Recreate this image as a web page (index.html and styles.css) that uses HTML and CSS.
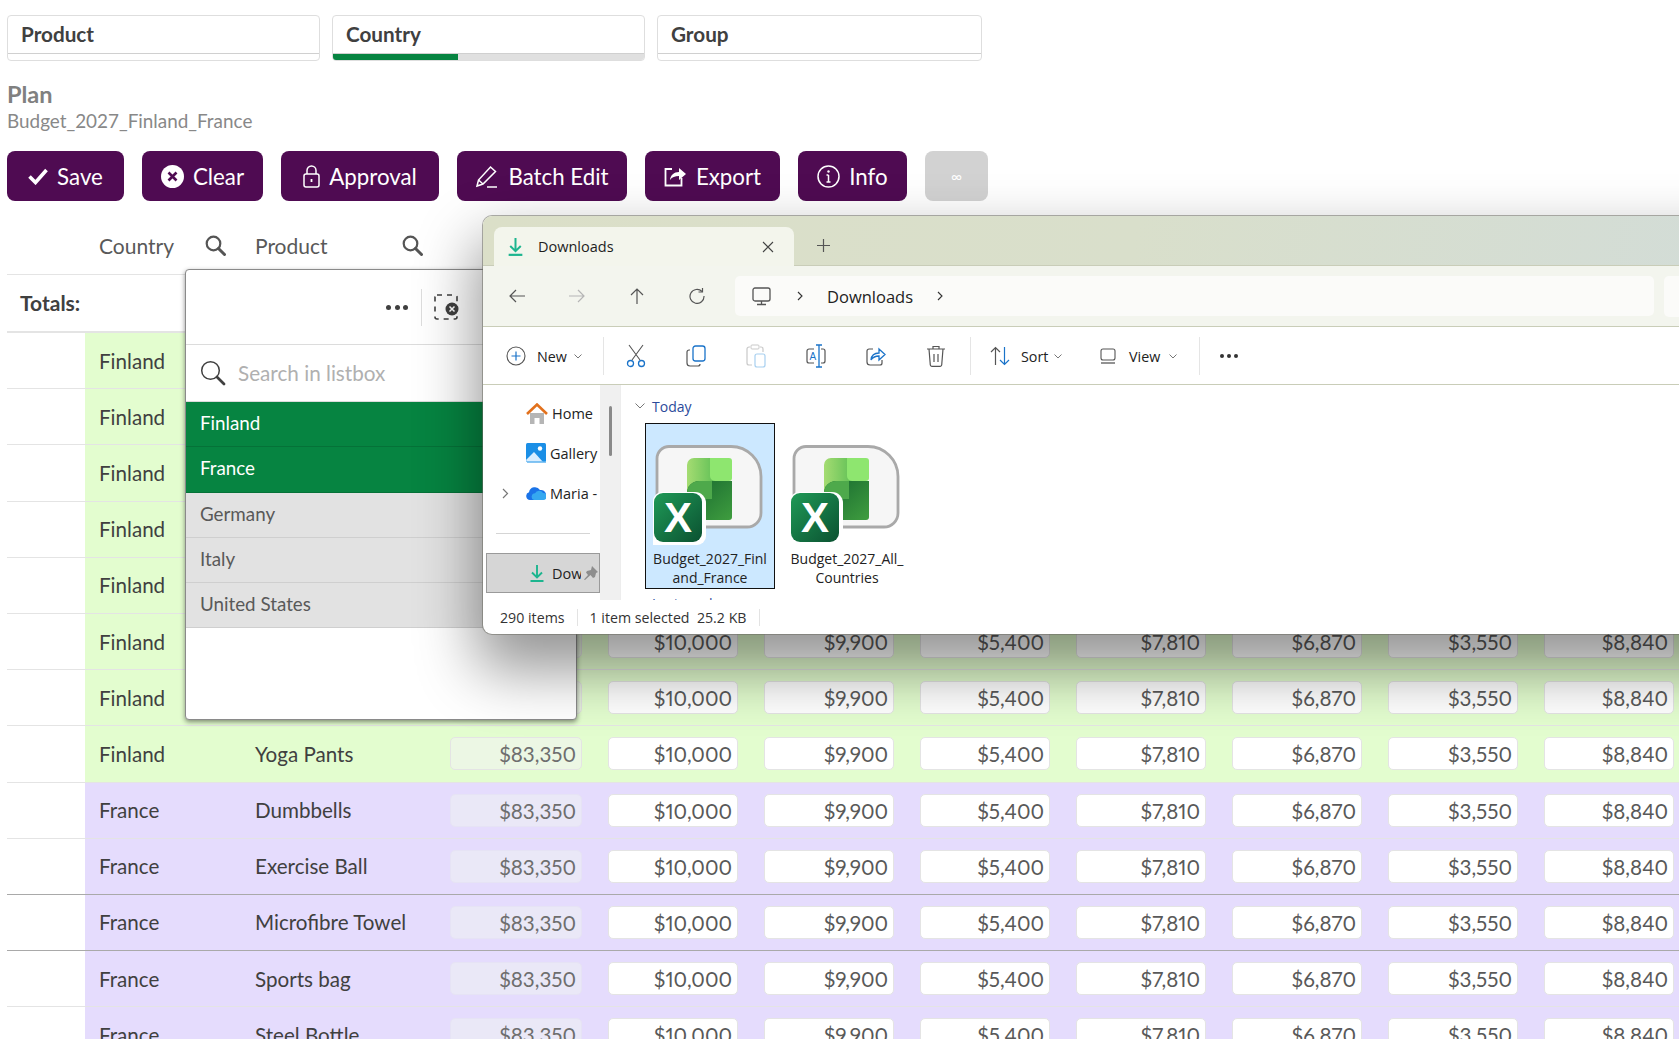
FILE: index.html
```html
<!DOCTYPE html>
<html lang="en">
<head>
    <meta charset="UTF-8">
    <title>Plan - Budget_2027_Finland_France</title>
    <link rel="stylesheet" href="styles.css">
</head>
<body>
    <svg class="defs" width="0" height="0">
        <defs>
            <linearGradient id="xl-badge" x1="0" y1="0" x2="1" y2="1"><stop offset="0" stop-color="#1f9a57"/><stop offset="1" stop-color="#0b5131"/></linearGradient>
            <linearGradient id="xl-top" x1="0" y1="0" x2="1" y2="0"><stop offset="0" stop-color="#a5dc72"/><stop offset="1" stop-color="#4cb84e"/></linearGradient>
            <linearGradient id="xl-body" x1="0" y1="0" x2="1" y2="1"><stop offset="0" stop-color="#17682f"/><stop offset="1" stop-color="#3f9d3f"/></linearGradient>
            <g id="search-icon"><circle cx="8.5" cy="8.5" r="6.8" fill="none" stroke="currentColor" stroke-width="2.2"/><path d="M13.5 13.5l6 6" stroke="currentColor" stroke-width="3" stroke-linecap="round"/></g>
            <g id="down-icon"><path d="M8 1v12M3 8.5l5 5 5-5" fill="none" stroke="#1db58f" stroke-width="1.9"/><path d="M1.5 17h13" stroke="#1db58f" stroke-width="2"/></g>
            <g id="xl-icon">
                <path d="M16 1.500h62a30 30 0 0 1 30 30V68a14 14 0 0 1-14 14H16A12 12 0 0 1 4 70V13.500a12 12 0 0 1 12-12z" fill="#f6f6f6" stroke="#a9a9a9" stroke-width="2.800"/>
                <path d="M34 20a7 7 0 0 1 7-7h30v23H58a12 12 0 0 0-12 12v6H34z" fill="url(#xl-top)"/>
                <path d="M34 54v-6a12 12 0 0 1 12-12h33v36a3 3 0 0 1-3 3H34z" fill="url(#xl-body)"/>
                <path d="M34 54v-6a12 12 0 0 1 12-12h13v18z" fill="#4ea94b"/>
                <path d="M57 13h19a3 3 0 0 1 3 3v17a3 3 0 0 1-3 3H62a5 5 0 0 1-5-5z" fill="#8ee66f"/>
                <path d="M0 56a9 9 0 0 1 9-9h33a11 11 0 0 1 11 11v33a9 9 0 0 1-9 9H0z" fill="#fff"/>
                <rect x="1" y="48" width="48" height="49" rx="9" fill="url(#xl-badge)"/>
                <text x="25" y="87" class="xl-letter">X</text>
            </g>
        </defs>
    </svg>

    <div class="page">
        <div class="tabs">
            <div class="tab"><span class="tab-name">Product</span><div class="tab-bar"></div></div>
            <div class="tab tab-country"><span class="tab-name">Country</span><div class="tab-bar"><div class="tab-fill"></div></div></div>
            <div class="tab tab-group"><span class="tab-name">Group</span><div class="tab-bar"></div></div>
        </div>

        <div class="plan-title">Plan</div>
        <div class="plan-name">Budget_2027_Finland_France</div>

        <div class="actions">
            <button class="btn btn-save"><svg width="20" height="18" viewBox="0 0 20 18"><path d="M1.5 9.5l6 6L18.5 3" fill="none" stroke="#fff" stroke-width="3.6"/></svg>Save</button>
            <button class="btn btn-clear"><svg width="23" height="23" viewBox="0 0 23 23"><circle cx="11.5" cy="11.5" r="11.5" fill="#fff"/><path d="M7.5 7.5l8 8M15.5 7.5l-8 8" stroke="#4f0b52" stroke-width="2.6"/></svg>Clear</button>
            <button class="btn btn-approval"><svg width="17" height="23" viewBox="0 0 17 23"><rect x="1" y="9" width="15" height="13" rx="2" fill="none" stroke="#fff" stroke-width="1.5"/><path d="M4 9V5.500a4.500 4.500 0 0 1 9 0V9" fill="none" stroke="#fff" stroke-width="1.5"/><path d="M8.500 14v3" stroke="#fff" stroke-width="1.800"/></svg>Approval</button>
            <button class="btn btn-batch"><svg width="24" height="24" viewBox="0 0 24 24"><path d="M2 22l1.500-6L15.500 3l5 4.500L8 20z" fill="none" stroke="#fff" stroke-width="1.500"/><path d="M3.500 16L8 20M12 23h10" stroke="#fff" stroke-width="1.500"/></svg>Batch Edit</button>
            <button class="btn btn-export"><svg width="23" height="22" viewBox="0 0 23 22"><path d="M8 4H1.500v16.500h16V13" fill="none" stroke="#fff" stroke-width="1.800"/><path d="M6 15c.5-5 4-8 9-8V3l7 6-7 6v-4c-4 0-7 1-9 4z" fill="#fff"/></svg>Export</button>
            <button class="btn btn-info"><svg width="23" height="23" viewBox="0 0 23 23"><circle cx="11.500" cy="11.500" r="10.500" fill="none" stroke="#fff" stroke-width="1.500"/><path d="M11.500 10v7M9.500 17h4M9.500 10h2" fill="none" stroke="#fff" stroke-width="1.500"/><circle cx="11.500" cy="6.500" r="1.200" fill="#fff"/></svg>Info</button>
            <button class="btn btn-off">∞</button>
        </div>

        <div class="grid-head">
            <span class="head-country">Country</span>
            <svg class="head-search" width="21" height="21" viewBox="0 0 21 21"><use href="#search-icon"/></svg>
            <span class="head-product">Product</span>
            <svg class="head-search" width="21" height="21" viewBox="0 0 21 21"><use href="#search-icon"/></svg>
        </div>
        <div class="totals">Totals:</div>

        <div class="rows">
            <div class="row fin"><div class="tint"><span class="c">Finland</span><span class="p">Dumbbells</span><span class="t">$83,350</span><span class="v">$10,000</span><span class="v">$9,900</span><span class="v">$5,400</span><span class="v">$7,810</span><span class="v">$6,870</span><span class="v">$3,550</span><span class="v">$8,840</span></div></div>
            <div class="row fin"><div class="tint"><span class="c">Finland</span><span class="p">Exercise Ball</span><span class="t">$83,350</span><span class="v">$10,000</span><span class="v">$9,900</span><span class="v">$5,400</span><span class="v">$7,810</span><span class="v">$6,870</span><span class="v">$3,550</span><span class="v">$8,840</span></div></div>
            <div class="row fin"><div class="tint"><span class="c">Finland</span><span class="p">Microfibre Towel</span><span class="t">$83,350</span><span class="v">$10,000</span><span class="v">$9,900</span><span class="v">$5,400</span><span class="v">$7,810</span><span class="v">$6,870</span><span class="v">$3,550</span><span class="v">$8,840</span></div></div>
            <div class="row fin"><div class="tint"><span class="c">Finland</span><span class="p">Sports bag</span><span class="t">$83,350</span><span class="v">$10,000</span><span class="v">$9,900</span><span class="v">$5,400</span><span class="v">$7,810</span><span class="v">$6,870</span><span class="v">$3,550</span><span class="v">$8,840</span></div></div>
            <div class="row fin"><div class="tint"><span class="c">Finland</span><span class="p">Steel Bottle</span><span class="t">$83,350</span><span class="v">$10,000</span><span class="v">$9,900</span><span class="v">$5,400</span><span class="v">$7,810</span><span class="v">$6,870</span><span class="v">$3,550</span><span class="v">$8,840</span></div></div>
            <div class="row fin"><div class="tint"><span class="c">Finland</span><span class="p">Water Bottle</span><span class="t">$83,350</span><span class="v">$10,000</span><span class="v">$9,900</span><span class="v">$5,400</span><span class="v">$7,810</span><span class="v">$6,870</span><span class="v">$3,550</span><span class="v">$8,840</span></div></div>
            <div class="row fin"><div class="tint"><span class="c">Finland</span><span class="p">Yoga Mat</span><span class="t">$83,350</span><span class="v">$10,000</span><span class="v">$9,900</span><span class="v">$5,400</span><span class="v">$7,810</span><span class="v">$6,870</span><span class="v">$3,550</span><span class="v">$8,840</span></div></div>
            <div class="row fin"><div class="tint"><span class="c">Finland</span><span class="p">Yoga Pants</span><span class="t">$83,350</span><span class="v">$10,000</span><span class="v">$9,900</span><span class="v">$5,400</span><span class="v">$7,810</span><span class="v">$6,870</span><span class="v">$3,550</span><span class="v">$8,840</span></div></div>
            <div class="row fra"><div class="tint"><span class="c">France</span><span class="p">Dumbbells</span><span class="t">$83,350</span><span class="v">$10,000</span><span class="v">$9,900</span><span class="v">$5,400</span><span class="v">$7,810</span><span class="v">$6,870</span><span class="v">$3,550</span><span class="v">$8,840</span></div></div>
            <div class="row fra dark-line"><div class="tint"><span class="c">France</span><span class="p">Exercise Ball</span><span class="t">$83,350</span><span class="v">$10,000</span><span class="v">$9,900</span><span class="v">$5,400</span><span class="v">$7,810</span><span class="v">$6,870</span><span class="v">$3,550</span><span class="v">$8,840</span></div></div>
            <div class="row fra dark-line"><div class="tint"><span class="c">France</span><span class="p">Microfibre Towel</span><span class="t">$83,350</span><span class="v">$10,000</span><span class="v">$9,900</span><span class="v">$5,400</span><span class="v">$7,810</span><span class="v">$6,870</span><span class="v">$3,550</span><span class="v">$8,840</span></div></div>
            <div class="row fra"><div class="tint"><span class="c">France</span><span class="p">Sports bag</span><span class="t">$83,350</span><span class="v">$10,000</span><span class="v">$9,900</span><span class="v">$5,400</span><span class="v">$7,810</span><span class="v">$6,870</span><span class="v">$3,550</span><span class="v">$8,840</span></div></div>
            <div class="row fra"><div class="tint"><span class="c">France</span><span class="p">Steel Bottle</span><span class="t">$83,350</span><span class="v">$10,000</span><span class="v">$9,900</span><span class="v">$5,400</span><span class="v">$7,810</span><span class="v">$6,870</span><span class="v">$3,550</span><span class="v">$8,840</span></div></div>
        </div>
    </div>

    <!-- listbox popup -->
    <div class="listbox">
        <div class="lb-top">
            <span class="lb-dots"><i></i><i></i><i></i></span>
            <span class="lb-sep"></span>
            <svg width="26" height="26" viewBox="0 0 26 26"><rect x="1" y="1" width="22" height="24" rx="2" fill="none" stroke="#404040" stroke-width="1.600" stroke-dasharray="5 5"/><circle cx="18" cy="15" r="6.500" fill="#404040"/><path d="M15.500 12.500l5 5M20.500 12.500l-5 5" stroke="#fff" stroke-width="1.500"/></svg>
        </div>
        <div class="lb-search">
            <svg width="26" height="26" viewBox="0 0 26 26"><circle cx="10.500" cy="10.500" r="8.800" fill="none" stroke="#404040" stroke-width="1.500"/><path d="M17 17l7 7" stroke="#404040" stroke-width="2.800" stroke-linecap="round"/></svg>
            <span>Search in listbox</span>
        </div>
        <div class="lb-item lb-on">Finland</div>
        <div class="lb-item lb-on">France</div>
        <div class="lb-item">Germany</div>
        <div class="lb-item">Italy</div>
        <div class="lb-item">United States</div>
    </div>

    <!-- file explorer window -->
    <div class="explorer">
        <div class="ex-title">
            <div class="ex-tab">
                <svg width="17" height="20" viewBox="0 0 16 19"><use href="#down-icon"/></svg>
                <span class="ex-tab-name">Downloads</span>
                <svg width="12" height="12" viewBox="0 0 12 12"><path d="M1 1l10 10M11 1L1 11" stroke="#444" stroke-width="1.100"/></svg>
            </div>
            <svg class="ex-plus" width="13" height="13" viewBox="0 0 13 13"><path d="M6.500 0v13M0 6.500h13" stroke="#555" stroke-width="1.200"/></svg>
        </div>

        <div class="ex-nav">
            <span class="nav-btn"><svg width="16" height="14" viewBox="0 0 16 14"><path d="M16 7H1M7 1L1 7l6 6" fill="none" stroke="#555" stroke-width="1.200"/></svg></span>
            <span class="nav-btn"><svg width="16" height="14" viewBox="0 0 16 14"><path d="M0 7h15M9 1l6 6-6 6" fill="none" stroke="#b5b5b5" stroke-width="1.200"/></svg></span>
            <span class="nav-btn"><svg width="14" height="16" viewBox="0 0 14 16"><path d="M7 16V1M1 7l6-6 6 6" fill="none" stroke="#555" stroke-width="1.200"/></svg></span>
            <span class="nav-btn"><svg width="16" height="16" viewBox="0 0 16 16"><path d="M13 3.500A7 7 0 1 0 15 8" fill="none" stroke="#555" stroke-width="1.200"/><path d="M13.500 0v4h-4" fill="none" stroke="#555" stroke-width="1.200"/></svg></span>
            <div class="address">
                <svg width="19" height="19" viewBox="0 0 19 19"><rect x="1" y="1" width="17" height="13" rx="2" fill="none" stroke="#555" stroke-width="1.300"/><path d="M9.500 14v3M5 17.500h9" stroke="#555" stroke-width="1.300"/></svg>
                <svg class="crumb-a" width="6" height="10" viewBox="0 0 6 10"><path d="M1 1l4 4-4 4" fill="none" stroke="#333" stroke-width="1.100"/></svg>
                <span class="crumb-text">Downloads</span>
                <svg class="crumb-b" width="6" height="10" viewBox="0 0 6 10"><path d="M1 1l4 4-4 4" fill="none" stroke="#333" stroke-width="1.100"/></svg>
            </div>
            <div class="search-stub"></div>
        </div>

        <div class="ex-cmd">
            <svg class="cmd-new" width="20" height="20" viewBox="0 0 20 20"><circle cx="10" cy="10" r="9" fill="none" stroke="#555" stroke-width="1.100"/><path d="M10 5.500v9M5.500 10h9" stroke="#1a73c9" stroke-width="1.200"/></svg>
            <span class="cmd-label lbl-new">New</span>
            <svg class="chev" width="8" height="5" viewBox="0 0 8 5"><path d="M.5.500L4 4 7.500.500" fill="none" stroke="#777"/></svg>
            <span class="cmd-sep sep-a"></span>
            <svg class="cmd-icon first" width="20" height="24" viewBox="0 0 20 24"><path d="M3 1l11 15M17 1L6 16" stroke="#555" stroke-width="1.100"/><circle cx="4.500" cy="19.500" r="3" fill="none" stroke="#1a73c9" stroke-width="1.300"/><circle cx="15.500" cy="19.500" r="3" fill="none" stroke="#1a73c9" stroke-width="1.300"/></svg>
            <svg class="cmd-icon" width="20" height="22" viewBox="0 0 20 22"><rect x="7" y="1" width="12" height="15" rx="2.500" fill="none" stroke="#1a73c9" stroke-width="1.300"/><path d="M4 5H3a2 2 0 0 0-2 2v11a3 3 0 0 0 3 3h8a2 2 0 0 0 2-2" fill="none" stroke="#555" stroke-width="1.200"/></svg>
            <svg class="cmd-icon" width="20" height="24" viewBox="0 0 20 24"><path d="M4 3H3a2 2 0 0 0-2 2v14a2 2 0 0 0 2 2h3M14 3h1a2 2 0 0 1 2 2v3" fill="none" stroke="#c9c9c9" stroke-width="1.200"/><rect x="5" y="1" width="8" height="4" rx="1" fill="none" stroke="#c9c9c9"/><rect x="9" y="10" width="10" height="13" rx="2" fill="none" stroke="#a8d0f0" stroke-width="1.200"/></svg>
            <svg class="cmd-icon" width="20" height="24" viewBox="0 0 20 24"><path d="M8 5H3a2 2 0 0 0-2 2v10a2 2 0 0 0 2 2h5M15 5h2a2 2 0 0 1 2 2v10a2 2 0 0 1-2 2h-2" fill="none" stroke="#555" stroke-width="1.200"/><path d="M10 1h6M10 23h6M13 1v22" stroke="#1a73c9" stroke-width="1.300"/><text x="3.500" y="16" class="rename-letter">A</text></svg>
            <svg class="cmd-icon" width="20" height="20" viewBox="0 0 20 20"><path d="M7 3H3a2 2 0 0 0-2 2v11a3 3 0 0 0 3 3h10a2 2 0 0 0 2-2v-3" fill="none" stroke="#555" stroke-width="1.200"/><path d="M5 14c.5-5 4-7 8-7V3l6 5.500-6 5.500v-4c-3 0-6 1-8 4z" fill="none" stroke="#1a73c9" stroke-width="1.300"/></svg>
            <svg class="cmd-icon" width="20" height="22" viewBox="0 0 20 22"><path d="M1 4h18M7 4V1.500h6V4M3 4l1.300 16a1.500 1.500 0 0 0 1.500 1.300h8.400a1.500 1.500 0 0 0 1.500-1.300L17 4" fill="none" stroke="#555" stroke-width="1.200"/><path d="M8 9v8M12 9v8" stroke="#555" stroke-width="1.200"/></svg>
            <span class="cmd-sep sep-b"></span>
            <svg class="cmd-sort" width="20" height="20" viewBox="0 0 20 20"><path d="M5.500 19V1.500M1 6l4.500-4.500L10 6" fill="none" stroke="#555" stroke-width="1.200"/><path d="M14.500 1v17.500M10 14l4.500 4.500L19 14" fill="none" stroke="#1a73c9" stroke-width="1.200"/></svg>
            <span class="cmd-label lbl-sort">Sort</span>
            <svg class="chev" width="8" height="5" viewBox="0 0 8 5"><path d="M.5.500L4 4 7.500.500" fill="none" stroke="#777"/></svg>
            <svg class="cmd-view" width="16" height="16" viewBox="0 0 16 16"><rect x="1" y="1" width="14" height="11" rx="2" fill="none" stroke="#555" stroke-width="1.100"/><path d="M1 15h14" stroke="#777" stroke-width="1.600"/></svg>
            <span class="cmd-label lbl-view">View</span>
            <svg class="chev" width="8" height="5" viewBox="0 0 8 5"><path d="M.5.500L4 4 7.500.500" fill="none" stroke="#777"/></svg>
            <span class="cmd-sep sep-c"></span>
            <span class="cmd-dots"><i></i><i></i><i></i></span>
        </div>

        <div class="ex-body">
            <div class="sidebar">
                <div class="side-item">
                    <svg width="22" height="21" viewBox="0 0 22 21"><path d="M4 10h14v11h-4.500v-6h-5v6H4z" fill="#b5b5b5"/><path d="M1 11l10-9.500L21 11" fill="none" stroke="#e2711d" stroke-width="2.600"/></svg>
                    <span>Home</span>
                </div>
                <div class="side-item">
                    <svg width="20" height="20" viewBox="0 0 20 20"><rect width="20" height="19" rx="1.500" fill="#1b8fe6"/><circle cx="14" cy="5.500" r="2.200" fill="#fff"/><path d="M0 17l8-8 9 10H1z" fill="#d9eeff"/><path d="M1 19h19" stroke="#5cb2ef" stroke-width="1.500"/></svg>
                    <span>Gallery</span>
                </div>
                <div class="side-item">
                    <svg class="side-chev" width="7" height="11" viewBox="0 0 7 11"><path d="M1 1l4.500 4.500L1 10" fill="none" stroke="#777" stroke-width="1.200"/></svg>
                    <svg width="20" height="14" viewBox="0 0 20 14"><path d="M4 14a4 4 0 0 1-1-7.800A6 6 0 0 1 14 4a5 5 0 0 1 2 10z" fill="#1a73e8"/><path d="M8 14a3.500 3.500 0 0 1 1-6.800A4.500 4.500 0 0 1 17 7a3.500 3.500 0 0 1 0 7z" fill="#35a8f0"/></svg>
                    <span>Maria -</span>
                </div>
                <div class="side-rule"></div>
                <div class="side-current">
                    <svg width="16" height="19" viewBox="0 0 16 19"><use href="#down-icon"/></svg>
                    <span class="side-name">Dow</span>
                    <svg class="pin" width="14" height="14" viewBox="0 0 14 14"><path d="M8 0l6 6-2 1-1 4-2 1-2.500-3L1 14l-1-.5L4 9 2 6.500 3 5l4-1z" fill="#8d8d8d"/></svg>
                </div>
                <div class="side-track"><div class="side-thumb"></div></div>
            </div>
            <div class="files">
                <div class="group-head">
                    <svg width="10" height="6" viewBox="0 0 10 6"><path d="M.5.500L5 5 9.500.500" fill="none" stroke="#777"/></svg>
                    <span>Today</span>
                </div>
                <div class="file-list">
                    <div class="file file-on">
                        <svg width="110" height="101" viewBox="0 0 110 101"><use href="#xl-icon"/></svg>
                        <span>Budget_2027_Finl<br>and_France</span>
                    </div>
                    <div class="file">
                        <svg width="110" height="101" viewBox="0 0 110 101"><use href="#xl-icon"/></svg>
                        <span>Budget_2027_All_<br>Countries</span>
                    </div>
                </div>
                <div class="group-head group-next">
                    <svg width="10" height="6" viewBox="0 0 10 6"><path d="M.5.500L5 5 9.500.500" fill="none" stroke="#777"/></svg>
                    <span>Last week</span>
                </div>
            </div>
        </div>

        <div class="ex-status">
            <span>290 items</span>
            <span class="st-sep"></span>
            <span>1 item selected&nbsp;&nbsp;25.2 KB</span>
            <span class="st-sep"></span>
        </div>
    </div>
</body>
</html>
```
FILE: styles.css
```css
html, body {
    margin: 0;
    height: 1039px;
    overflow: hidden;
    background: #fff;
}
body {
    font-family: "Lato", "Open Sans", sans-serif;
    color: #404040;
    position: relative;
}
.defs {
    position: absolute;
}
.xl-letter {
    font-family: "Liberation Sans", sans-serif;
    font-weight: 700;
    font-size: 42px;
    fill: #fff;
    text-anchor: middle;
}
.rename-letter {
    font-family: "Liberation Sans", sans-serif;
    font-size: 10px;
    fill: #1a73c9;
}

/* top filter tabs */
.page {
    padding: 15px 0 0 7px;
}
.tabs {
    display: flex;
    gap: 12px;
}
.tab {
    width: 313px;
    height: 46px;
    box-sizing: border-box;
    border: 1px solid #dedede;
    border-radius: 4px;
    display: flex;
    flex-direction: column;
    overflow: hidden;
}
.tab-group {
    width: 325px;
}
.tab-name {
    height: 37px;
    line-height: 36px;
    padding-left: 13px;
    font-size: 20.700px;
    font-weight: 700;
    border-bottom: 1px solid #d0d0d0;
}
.tab-bar {
    flex: 1;
}
.tab-country .tab-bar {
    background: #e0e0e0;
}
.tab-fill {
    width: 125px;
    height: 100%;
    background: #068441;
}

.plan-title {
    margin-top: 20px;
    height: 26px;
    line-height: 26px;
    font-size: 23.500px;
    font-weight: 700;
    color: #808080;
}
.plan-name {
    height: 27px;
    line-height: 27px;
    font-size: 18.900px;
    color: #888;
}

/* button row */
.actions {
    display: flex;
    gap: 18px;
    margin-top: 17px;
}
.btn {
    height: 50px;
    border: 0;
    border-radius: 8px;
    background: #4f0b52;
    color: #fff;
    font-family: inherit;
    font-size: 22.300px;
    display: flex;
    align-items: center;
    justify-content: center;
    gap: 9px;
    padding: 0;
}
.btn-save { width: 117px; }
.btn-clear { width: 121px; }
.btn-approval { width: 158px; }
.btn-batch { width: 170px; }
.btn-export { width: 135px; }
.btn-info { width: 109px; }
.btn-off {
    width: 63px;
    background: #d2d2d2;
    font-size: 15px;
}

/* grid */
.grid-head {
    height: 74px;
    box-sizing: border-box;
    padding-top: 16px;
    display: flex;
    align-items: center;
    font-size: 21px;
    color: #595959;
    border-bottom: 1px solid #e4e4e4;
}
.head-country {
    margin-left: 92px;
    width: 106px;
}
.head-product {
    margin-left: 29px;
    width: 147px;
}
.head-search {
    color: #555;
}
.totals {
    height: 58px;
    box-sizing: border-box;
    line-height: 55px;
    padding-left: 13px;
    font-size: 21px;
    font-weight: 700;
    border-bottom: 2px solid #e4e4e4;
}
.row {
    height: 56.2px;
    box-sizing: border-box;
    border-bottom: 1.5px solid #e4e4e4;
    padding-left: 78px;
}
.dark-line {
    border-bottom-color: #a9a9a9;
}
.tint {
    height: 100%;
    display: flex;
    align-items: center;
    gap: 26px;
    font-size: 20.600px;
    font-variant-numeric: proportional-nums;
    color: #404040;
}
.fin .tint {
    background: #e3fdcf;
}
.fra .tint {
    background: #e5dcfd;
}
.c {
    width: 156px;
    padding-left: 14px;
    margin-right: -26px;
    flex: none;
}
.p {
    width: 195px;
    flex: none;
    margin-right: -26px;
}
.t, .v {
    height: 33px;
    line-height: 33px;
    box-sizing: border-box;
    flex: none;
    text-align: right;
    border-radius: 5px;
    padding-right: 5px;
    border: 1px solid #e4e4e4;
    color: #595959;
}
.t {
    width: 132px;
}
.v {
    width: 130px;
    background: #fff;
}
.fin .t {
    background: #ecf7e4;
    color: #6e6e6e;
}
.fra .t {
    background: #eae8f7;
    border-color: #e6e3f5;
    color: #6e6e6e;
}

/* listbox popup */
.listbox {
    position: absolute;
    left: 185px;
    top: 269px;
    width: 392px;
    height: 451px;
    box-sizing: border-box;
    background: #fff;
    border: 1px solid #8a8a8a;
    border-radius: 4px;
    box-shadow: 0 2px 5px rgba(0, 0, 0, .45);
    overflow: hidden;
}
.lb-top {
    height: 75px;
    box-sizing: border-box;
    border-bottom: 1px solid #dcdcdc;
    display: flex;
    align-items: center;
    padding-left: 200px;
}
.lb-dots {
    display: flex;
    gap: 3.500px;
    width: 35px;
}
.lb-dots i, .cmd-dots i {
    width: 5px;
    height: 5px;
    border-radius: 50%;
    background: #404040;
}
.lb-sep {
    width: 1px;
    height: 37px;
    background: #ddd;
    margin-right: 12px;
}
.lb-search {
    height: 56px;
    display: flex;
    align-items: center;
    gap: 12px;
    padding-left: 14px;
    font-size: 20.700px;
    color: #b0b0b0;
    border-bottom: 1px solid #dcdcdc;
}
.lb-item {
    height: 45.300px;
    line-height: 42px;
    box-sizing: border-box;
    padding-left: 14px;
    font-size: 18.800px;
    background: #e2e2e2;
    color: #595959;
    border-bottom: 1px solid #cfcfcf;
}
.lb-on {
    background: #068441;
    color: #fff;
    border-bottom-color: #057238;
}

/* file explorer */
.explorer {
    position: absolute;
    left: 483px;
    top: 216px;
    width: 1300px;
    height: 418px;
    background: #fff;
    border-radius: 9px;
    box-shadow: 0 0 0 1px rgba(110, 110, 100, .55), 0 30px 60px 6px rgba(0, 0, 0, .42);
    overflow: hidden;
    font-family: "Open Sans", "Noto Sans", sans-serif;
    font-size: 14.500px;
    color: #222;
}
.ex-title {
    height: 50px;
    box-sizing: border-box;
    border-bottom: 1px solid #c9cdb8;
    background: linear-gradient(100deg, #dbdfc8 0%, #d9dfcb 50%, #d2dcd8 100%);
    display: flex;
    align-items: flex-end;
    padding-left: 11px;
}
.ex-tab {
    width: 300px;
    height: 39px;
    margin-bottom: -1px;
    box-sizing: border-box;
    background: #f3f5ec;
    border-radius: 8px 8px 0 0;
    display: flex;
    align-items: center;
    padding-left: 13px;
    font-size: 14.500px;
    font-weight: 500;
    color: #1e1e1e;
}
.ex-tab-name {
    margin-left: 14px;
    width: 224px;
}
.ex-plus {
    margin: 0 0 13px 23px;
}
.ex-nav {
    height: 61px;
    box-sizing: border-box;
    border-bottom: 1px solid #c9cdb8;
    background: #f3f5ee;
    display: flex;
    align-items: center;
    padding-left: 4px;
}
.nav-btn {
    width: 60px;
    flex: none;
    display: flex;
    justify-content: center;
}
.address {
    margin-left: 8px;
    width: 919px;
    height: 40px;
    flex: none;
    border-radius: 5px;
    background: #fbfbf9;
    display: flex;
    align-items: center;
    padding-left: 17px;
    box-sizing: border-box;
    font-size: 16.500px;
}
.crumb-a {
    margin-left: 26px;
}
.crumb-text {
    margin-left: 24px;
    width: 110px;
}
.search-stub {
    margin-left: 10px;
    width: 300px;
    height: 41px;
    flex: none;
    border-radius: 5px;
    background: #fbfbf9;
}
.ex-cmd {
    height: 58px;
    box-sizing: border-box;
    border-bottom: 1px solid #c9cdb8;
    display: flex;
    align-items: center;
    padding: 1px 0 0 23px;
    font-size: 14.300px;
}
.cmd-label {
    margin-left: 11px;
}
.lbl-new {
    width: 37px;
}
.lbl-sort {
    width: 33px;
}
.lbl-view {
    margin-left: 13px;
    width: 40px;
}
.chev {
    flex: none;
}
.cmd-sep {
    width: 1px;
    height: 38px;
    background: #e5e5e5;
}
.sep-a {
    margin-left: 21px;
}
.cmd-icon {
    margin-left: 40px;
    flex: none;
}
.cmd-icon.first {
    margin-left: 22px;
}
.sep-b {
    margin-left: 24px;
}
.cmd-sort {
    margin-left: 19px;
}
.cmd-view {
    margin-left: 38px;
}
.sep-c {
    margin-left: 22px;
}
.cmd-dots {
    display: flex;
    gap: 3px;
    margin-left: 20px;
}
.cmd-dots i {
    width: 4px;
    height: 4px;
    background: #333;
}

.ex-body {
    height: 215px;
    display: flex;
    overflow: hidden;
}
.sidebar {
    width: 138px;
    flex: none;
    height: 100%;
    position: relative;
    box-sizing: border-box;
    padding-top: 8px;
    border-right: 1px solid #ededed;
    overflow: hidden;
}
.side-item {
    height: 40px;
    display: flex;
    align-items: center;
    padding-left: 43px;
    gap: 4px;
    white-space: nowrap;
    position: relative;
}
.side-chev {
    position: absolute;
    left: 19px;
    top: 15px;
}
.side-rule {
    margin: 20px 0 0 13px;
    width: 94px;
    height: 1px;
    background: #d5d5d5;
}
.side-current {
    margin: 19px 0 0 3px;
    width: 114px;
    height: 40px;
    box-sizing: border-box;
    background: #d6d6d6;
    border: 1px solid #9a9a9a;
    display: flex;
    align-items: center;
    padding-left: 42px;
    gap: 7px;
}
.side-name {
    width: 29px;
    overflow: hidden;
}
.pin {
    margin-left: -4px;
}
.side-track {
    position: absolute;
    left: 117px;
    top: 0;
    width: 21px;
    height: 100%;
    background: #f0f0f0;
}
.side-thumb {
    margin: 21px 0 0 9px;
    width: 2.500px;
    height: 50px;
    background: #8a8a8a;
    border-radius: 2px;
}
.files {
    flex: 1;
    padding-top: 10px;
}
.group-head {
    display: flex;
    align-items: center;
    gap: 7px;
    padding-left: 14px;
    height: 22px;
    font-size: 14px;
    color: #2b4a9b;
}
.group-next {
    margin-top: 3px;
}
.file-list {
    display: flex;
    gap: 7px;
    margin: 6px 0 0 24px;
}
.file {
    width: 130px;
    height: 166px;
    box-sizing: border-box;
    border: 1px solid transparent;
    padding-top: 21px;
    display: flex;
    flex-direction: column;
    align-items: center;
    text-align: center;
    line-height: 19.300px;
    font-size: 14px;
}
.file svg {
    margin-left: -5px;
}
.file span {
    margin-top: 3px;
}
.file-on {
    background: #cce8ff;
    border-color: #111;
}
.ex-status {
    height: 34px;
    display: flex;
    align-items: center;
    padding: 1px 0 0 17px;
    box-sizing: border-box;
    gap: 12px;
    font-size: 14.200px;
    color: #333;
}
.st-sep {
    width: 1px;
    height: 17px;
    background: #e3e3e3;
}
```
